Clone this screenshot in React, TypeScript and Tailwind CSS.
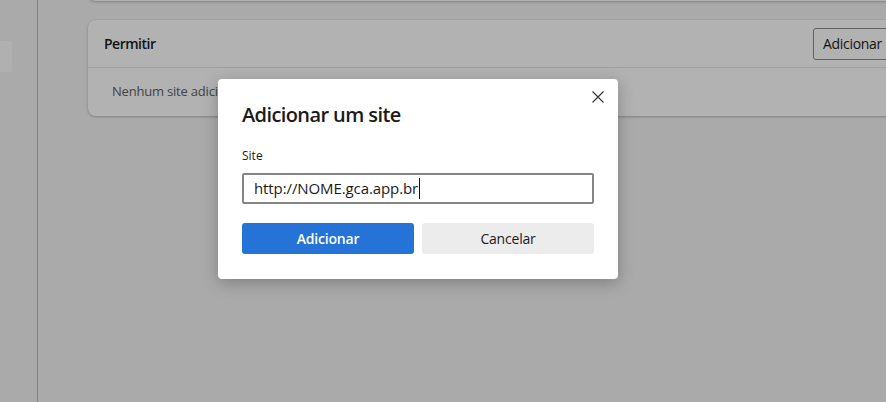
import React from "react";

export default function App() {
  return (
    <div
      className="relative w-[886px] h-[402px] overflow-hidden bg-[#f4f4f4] flex"
      style={{ fontFamily: '"Open Sans", "Noto Sans", sans-serif' }}
    >
      {/* Sidebar */}
      <div className="w-[38px] h-full border-r border-[#b8b8b8] shrink-0 pt-[41px]">
        <div className="w-[12px] h-[31px] rounded-r-[3px] bg-[#fcfcfc]" />
      </div>

      {/* Main */}
      <div className="flex-1 pl-[50px] flex flex-col">
        <div className="-mt-[40px] h-[41px] w-[823px] rounded-lg bg-white shadow-[0_1px_3px_rgba(0,0,0,0.25)]" />
        <div className="mt-[19px] w-[823px] shrink-0 rounded-lg bg-white shadow-[0_1px_3px_rgba(0,0,0,0.25)]">
          <div className="h-[48px] flex items-center justify-between px-[16px] border-b border-[#e4e4e4]">
            <span className="text-[14px] font-semibold text-[#1b1b1b] tracking-[-0.5px]">Permitir</span>
            <div className="h-[32px] w-[82px] shrink-0 px-[9px] flex items-center border border-[#8a8a8a] rounded-[3px] bg-white text-[14px] text-[#1b1b1b] tracking-[-0.3px] whitespace-nowrap">
              Adicionar
            </div>
          </div>
          <div className="h-[48px] flex items-center pl-[24px] text-[13px] text-[#616161] tracking-[-0.2px]">
            Nenhum site adicionado
          </div>
        </div>
      </div>

      {/* Overlay */}
      <div className="absolute inset-0 bg-[rgba(0,0,0,0.3)]" />

      {/* Dialog */}
      <div className="absolute left-[218px] top-[79px] w-[400px] h-[200px] bg-white rounded-[4px] shadow-[0_4px_16px_rgba(0,0,0,0.25)] px-[24px] pt-[22px]">
        <button className="absolute right-[13px] top-[11px] w-[14px] h-[14px] flex items-center justify-center">
          <svg width="14" height="14" viewBox="0 0 14 14" fill="none">
            <path d="M1.5 1.5 L12.5 12.5 M12.5 1.5 L1.5 12.5" stroke="#333" strokeWidth="1.1" />
          </svg>
        </button>
        <h2 className="text-[20px] leading-[28px] font-semibold text-[#1b1b1b] tracking-[-0.6px]">
          Adicionar um site
        </h2>
        <div className="mt-[20px] text-[12px] leading-[14px] text-[#1b1b1b]">Site</div>
        <div className="mt-[10px] h-[31px] w-[352px] border-2 border-[#858585] rounded-[2px] flex items-center pl-[10px] text-[15px] text-[#1b1b1b] tracking-[-0.1px]">
          <span>http://NOME.gca.app.br</span>
          <span className="w-[1px] h-[21px] bg-[#111] ml-[1px]" />
        </div>
        <div className="mt-[19px] flex gap-[8px]">
          <button className="w-[172px] h-[31px] rounded-[3px] bg-[#2673d8] text-white text-[14px] font-semibold tracking-[-0.2px]">
            Adicionar
          </button>
          <button className="w-[172px] h-[31px] rounded-[3px] bg-[#ececec] text-[#1b1b1b] text-[14px] font-medium tracking-[-0.2px]">
            Cancelar
          </button>
        </div>
      </div>
    </div>
  );
}
